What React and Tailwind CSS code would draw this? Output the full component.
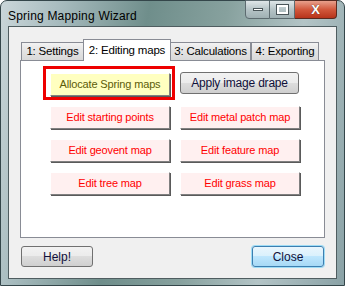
import React from 'react';

const font = { fontFamily: '"Liberation Sans", Arial, sans-serif' };

function MapButton({ label }) {
  return (
    <button className="h-[23px] w-[120px] bg-[#fff0f0] border border-t-white border-l-white border-r-[#808080] border-b-[#808080] shadow-[1px_1px_0_#5a5a5a] text-[11px] tracking-[-0.15px] text-[#ff0000]">
      {label}
    </button>
  );
}

function VistaButton({ label, primary }) {
  return (
    <button
      className={
        primary
          ? 'h-[21px] w-[72px] rounded-[3px] border border-[#3c7fb1] shadow-[0_0_0_1px_#9fdcf5] bg-[linear-gradient(#eaf6fd_0%,#d9f0fc_50%,#bee6fd_50%,#a7d9f5_100%)] text-[12px] text-[#10103a]'
          : 'h-[21px] w-[72px] rounded-[3px] border border-[#707070] bg-[linear-gradient(#f2f2f2_0%,#ebebeb_50%,#dddddd_50%,#cfcfcf_100%)] text-[12px] text-[#10103a]'
      }
    >
      {label}
    </button>
  );
}

function Tab({ label, active, width }) {
  if (active) {
    return (
      <div
        className="h-[22px] -mb-px relative z-10 bg-white border border-b-0 border-[#898c95] flex items-center justify-center text-[11.5px] tracking-[-0.2px] text-black"
        style={{ width }}
      >
        {label}
      </div>
    );
  }
  return (
    <div
      className="h-[18px] mt-[3px] -mx-px bg-[linear-gradient(#f2f2f2,#e3e3e3_50%,#d9d9d9)] border border-b-0 border-[#898c95] flex items-center justify-center text-[11.5px] tracking-[-0.2px] text-black"
      style={{ width }}
    >
      {label}
    </div>
  );
}

export default function App() {
  return (
    <div className="w-[345px] h-[286px] bg-white" style={font}>
      <div className="w-[345px] h-[286px] rounded-t-[7px] border border-[#34464a] bg-[linear-gradient(100deg,#cad6d9_0%,#a8bcbf_15%,#6f8e8b_38%,#87a19e_58%,#b3c4c6_78%,#8aa2a6_100%)] flex flex-col">
        {/* title bar */}
        <div className="h-[25px] flex items-start relative">
          <div className="pl-[7px] pt-[6px] text-[12px] text-black tracking-[0.2px]">Spring Mapping Wizard</div>
          <div className="absolute right-[7px] -top-px flex">
            <div className="w-[25px] h-[19px] rounded-bl-[4px] border border-[#5d6b70] bg-[linear-gradient(#dfe6e8,#b6c4c7_50%,#9fb0b3)] flex items-center justify-center">
              <div className="w-[10px] h-[3px] bg-white border border-[#4a5559]" />
            </div>
            <div className="w-[25px] h-[19px] border border-l-0 border-[#5d6b70] bg-[linear-gradient(#dfe6e8,#b6c4c7_50%,#9fb0b3)] flex items-center justify-center">
              <div className="w-[11px] h-[9px] border-2 border-white outline outline-1 outline-[#4a5559]" />
            </div>
            <div className="w-[42px] h-[19px] rounded-br-[4px] border border-l-0 border-[#5a2a20] bg-[linear-gradient(#e8a08c,#d2583c_50%,#b7341b)] flex items-center justify-center">
              <span className="text-white font-bold text-[13px] leading-none [text-shadow:0_0_1px_#3a1a10]">X</span>
            </div>
          </div>
        </div>

        {/* client area */}
        <div className="mx-[7px] h-[253px] bg-[#f0f0f0] border border-[#4f5d60] flex flex-col">
          <div className="px-[11px] pt-[11px]">
            <div className="flex items-end pl-[2px] h-[22px]">
              <Tab label="1: Settings" width={63} />
              <Tab label="2: Editing maps" active width={88} />
              <Tab label="3: Calculations" width={81} />
              <div className="w-[2px]" />
              <Tab label="4: Exporting" width={68} />
            </div>
            <div className="h-[178px] bg-white border border-[#898c95] pl-[29px] pt-[10px]">
              <div className="grid grid-cols-[120px_120px] gap-x-[10px] gap-y-[10px]">
                <div className="relative">
                  <div className="absolute -left-[7px] -top-[5px] w-[132px] h-[34px] border-[3px] border-[#ee0000]" />
                  <button className="relative h-[23px] w-[120px] bg-[#ffffc0] border border-t-white border-l-white border-r-[#808080] border-b-[#808080] shadow-[1px_1px_0_#5a5a5a] text-[11px] tracking-[-0.15px] text-[#5c5c08]">
                    Allocate Spring maps
                  </button>
                </div>
                <button className="h-[22px] mt-px w-[119px] rounded-[3px] border border-[#707070] bg-[linear-gradient(#f2f2f2_0%,#ebebeb_50%,#dddddd_50%,#cfcfcf_100%)] text-[12px] tracking-[-0.2px] text-[#10103a]">
                  Apply image drape
                </button>
                <MapButton label="Edit starting points" />
                <MapButton label="Edit metal patch map" />
                <MapButton label="Edit geovent map" />
                <MapButton label="Edit feature map" />
                <MapButton label="Edit tree map" />
                <MapButton label="Edit grass map" />
              </div>
            </div>
          </div>
          <div className="flex justify-between px-[12px] pt-[8px]">
            <VistaButton label="Help!" />
            <VistaButton label="Close" primary />
          </div>
        </div>
      </div>
    </div>
  );
}
